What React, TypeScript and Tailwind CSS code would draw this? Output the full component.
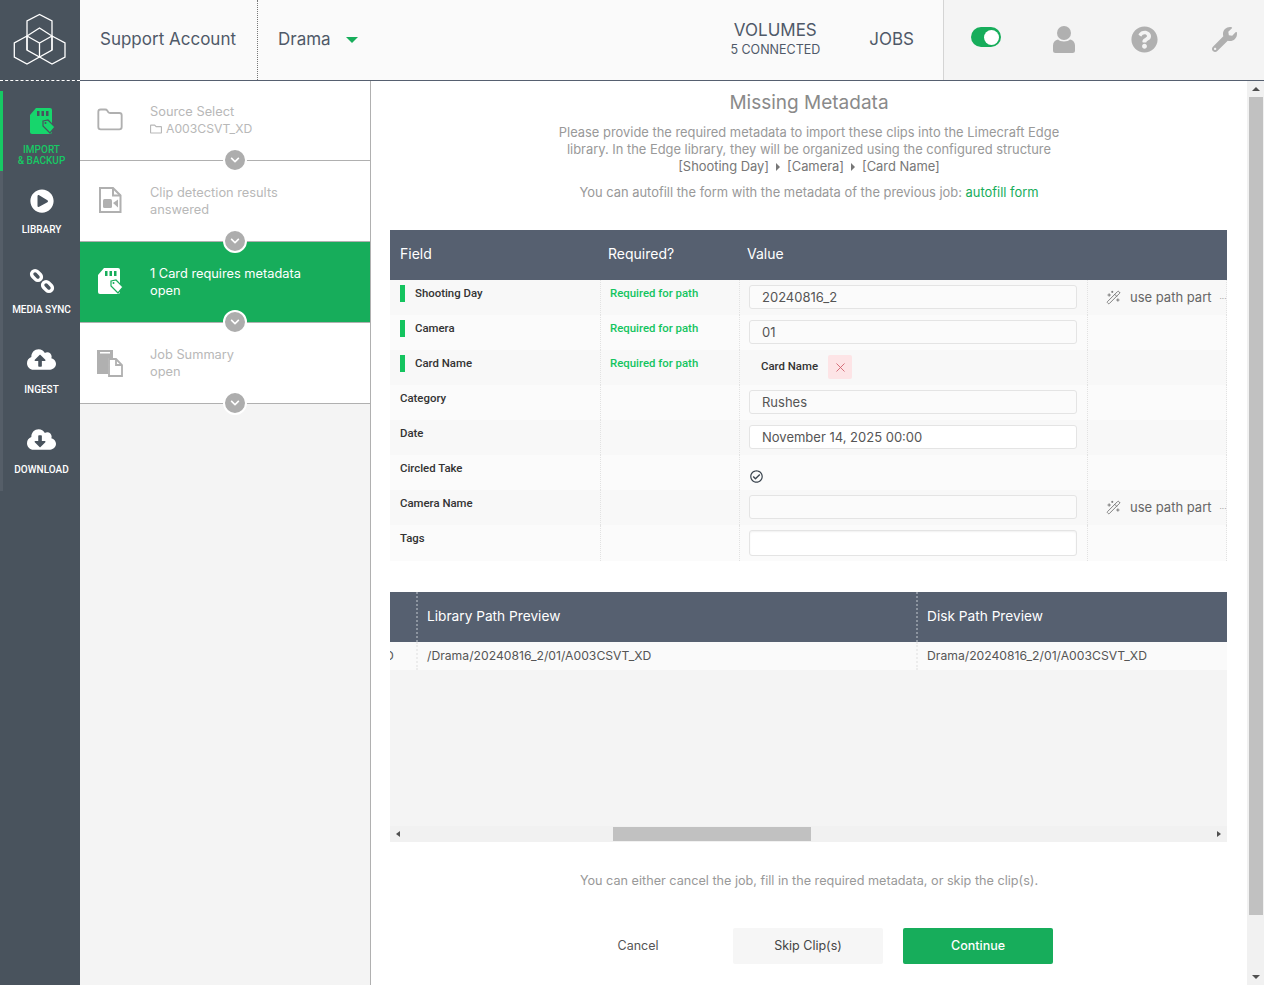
import React from "react";
import {
  FaChevronDown,
  FaCloudDownloadAlt,
  FaCloudUploadAlt,
  FaPlayCircle,
  FaQuestionCircle,
  FaRegCheckCircle,
  FaRegFolder,
  FaWrench,
} from "react-icons/fa";
import { Folder, WandSparkles, X } from "lucide-react";

const BODY = "font-['Inter','Liberation_Sans',sans-serif]";
const LABEL = "font-['Roboto','Liberation_Sans',sans-serif]";

const Logo = () => (
  <svg width="80" height="80" viewBox="0 0 80 80" fill="none" stroke="#fff" strokeWidth="1.3">
    <path d="M27 50V21L39.5 14.5L52 21V50" />
    <path d="M27 36L39.5 28L52 36V50L39.5 57L27 50Z" />
    <path d="M27 36L39.5 43L52 36M39.5 43V57" />
    <path d="M27 36L14.3 43V57L27 64L39.5 57L52 64L65 57V43L52 36" />
  </svg>
);

const SdCard = ({ color, tag }: { color: string; tag: string }) => (
  <svg width="26" height="26" viewBox="0 0 26 26">
    <path d="M7 0H21a2 2 0 0 1 2 2V24a2 2 0 0 1-2 2H3a2 2 0 0 1-2-2V7Z" fill={color} />
    <path d="M8 3h2.500v5H8ZM12.500 3H15v5h-2.500ZM17 3h2.500v5H17Z" fill={tag} />
    <path d="M14 13l5-1 7 7-5 6-7-7Z" fill={color} stroke={tag} strokeWidth="1.2" />
    <circle cx="16.500" cy="15" r="1" fill={tag} />
  </svg>
);

const VideoFile = () => (
  <svg width="24" height="26" viewBox="0 0 24 26" fill="none">
    <path d="M2 1H15L22.500 8.500V25H2Z" stroke="#b0b0b0" strokeWidth="2" />
    <path d="M15 1V8.500H22.500" stroke="#b0b0b0" strokeWidth="2" />
    <rect x="5" y="12" width="9" height="9" rx="1.500" fill="#b0b0b0" />
    <path d="M15 16L20 12.500V20.500Z" fill="#b0b0b0" />
  </svg>
);

const Summary = () => (
  <svg width="28" height="28" viewBox="0 0 28 28">
    <path d="M1 1H17V9H12V25H1Z" fill="#b0b0b0" />
    <path d="M13 10H20L26 16V27H13Z" fill="#fff" stroke="#b0b0b0" strokeWidth="1.800" />
    <path d="M20 10V16H26" fill="none" stroke="#b0b0b0" strokeWidth="1.800" />
    <rect x="4" y="3" width="10" height="1.500" fill="#fff" />
  </svg>
);

const ChainLink = () => (
  <svg width="26" height="26" viewBox="0 0 26 26" fill="none" stroke="#fff" strokeWidth="3.4">
    <rect x="2" y="4" width="11" height="7" rx="3.500" transform="rotate(45 7.500 7.500)" />
    <rect x="13" y="15" width="11" height="7" rx="3.500" transform="rotate(45 18.500 18.500)" />
  </svg>
);

const UserIcon = () => (
  <svg width="22" height="27" viewBox="0 0 22 27" fill="#b0b0b0">
    <circle cx="11" cy="7" r="7" />
    <path d="M5 13.500C7 16 15 16 17 13.500C20 14 22 16.500 22 19.500V24.500A2.500 2.500 0 0 1 19.500 27H2.500A2.500 2.500 0 0 1 0 24.500V19.500C0 16.500 2 14 5 13.500Z" />
  </svg>
);

const NavItem = ({
  icon,
  label,
  active,
}: {
  icon: React.ReactNode;
  label: React.ReactNode;
  active?: boolean;
}) => (
  <div
    className={`flex h-[80px] flex-col items-center border-l-[3px] pt-[17px] ${
      active ? "border-[#17c964] text-[#17c964]" : "border-[#555e68] text-white"
    }`}
  >
    <div className="flex h-[26px] items-center justify-center">{icon}</div>
    <div className={`${LABEL} mt-[10px] text-center text-[10px] leading-[11px] font-medium`}>{label}</div>
  </div>
);

const Step = ({
  icon,
  title,
  sub,
  active,
  first,
}: {
  icon: React.ReactNode;
  title: string;
  sub: React.ReactNode;
  active?: boolean;
  first?: boolean;
}) => (
  <div
    className={`relative flex shrink-0 border-b border-[#b0b0b0] ${first ? "h-[80px]" : "h-[81px]"} ${
      active ? "bg-[#17ad5b] text-white" : "bg-white text-[#b8b8b8]"
    }`}
  >
    <div className={`flex w-[70px] items-start justify-center pr-[10px] ${first ? "pt-[25px]" : "pt-[26px]"}`}>{icon}</div>
    <div className={`${BODY} text-[12.8px] leading-[17px] ${first ? "pt-[22px]" : "pt-[23px]"}`}>
      <div>{title}</div>
      <div>{sub}</div>
    </div>
    <div className="absolute bottom-[-12px] left-[143px] z-10 box-content flex h-[20px] w-[20px] items-center justify-center rounded-full border-[2px] border-white bg-[#adadad]">
      <FaChevronDown className="text-white" size={10} />
    </div>
  </div>
);

type Row = {
  name: string;
  required?: boolean;
  value: React.ReactNode;
  path?: boolean;
  height?: string;
};

const Input = ({ value, white, tall }: { value?: string; white?: boolean; tall?: boolean }) => (
  <div
    className={`${BODY} flex w-[328px] items-center rounded-[3px] border border-[#e4e4e4] pt-[1px] pl-[12px] text-[13px] text-[#555] ${
      tall ? "h-[26px] shadow-[inset_0_1px_2px_rgba(0,0,0,0.06)]" : "h-[24px]"
    } ${white ? "bg-white" : "bg-[#fbfbfb]"}`}
  >
    {value}
  </div>
);

const rows: Row[] = [
  { name: "Shooting Day", required: true, value: <Input value="20240816_2" />, path: true },
  { name: "Camera", required: true, value: <Input value="01" /> },
  {
    name: "Card Name",
    required: true,
    value: (
      <div className="flex items-center">
        <span className={`${LABEL} ml-[12px] w-[67px] text-[11.4px] font-medium text-[#333]`}>Card Name</span>
        <span className="flex h-[24px] w-[24px] items-center justify-center rounded-[2px] bg-[#fde4e6]">
          <X size={15} className="text-[#d0606c]" strokeWidth={1.4} />
        </span>
      </div>
    ),
  },
  { name: "Category", value: <Input value="Rushes" /> },
  { name: "Date", value: <Input value="November 14, 2025 00:00" white /> },
  {
    name: "Circled Take",
    value: <FaRegCheckCircle size={13} className="mt-[10px] ml-[1px] text-[#3c4650]" />,
  },
  { name: "Camera Name", value: <Input />, path: true },
  { name: "Tags", value: <Input white tall />, height: "h-[36px]" },
];

const UsePath = () => (
  <div className={`${BODY} flex items-center text-[13px] whitespace-nowrap text-[#666]`}>
    <WandSparkles size={15} strokeWidth={1.3} className="ml-[18px] shrink-0 text-[#666]" />
    <span className="ml-[9px]">use path part</span>
    <span className="ml-[8px] text-[8px] text-[#999]">···</span>
  </div>
);

const SEP = "border-l border-dotted border-[#e2e2e2]";

const MetadataTable = () => (
  <div className="w-[837px]">
    <div className={`${BODY} flex h-[50px] items-center bg-[#566070] pb-[3px] text-[14px] text-white`}>
      <div className="w-[218px] pl-[10px]">Field</div>
      <div className="w-[139px]">Required?</div>
      <div>Value</div>
    </div>
    {rows.map((row, i) => (
      <div
        key={row.name}
        className={`flex ${row.height ?? "h-[35px]"} ${i % 2 === 0 ? "bg-[#f8f8f8]" : "bg-[#fbfbfb]"}`}
      >
        <div className={`${LABEL} flex w-[210px] items-start pl-[10px] text-[11.4px] font-medium text-[#333]`}>
          {row.required && <span className="mt-[5px] mr-[10px] h-[17px] w-[5px] bg-[#14c45f]" />}
          <span className="mt-[5px]">{row.name}</span>
        </div>
        <div className={`${SEP} ${LABEL} w-[139px] pt-[5px] pl-[9px] text-[11.4px] font-medium text-[#14c45f]`}>
          {row.required && "Required for path"}
        </div>
        <div className={`${SEP} flex w-[348px] items-start pt-[5px] pl-[9px]`}>{row.value}</div>
        <div className={`${SEP} flex w-[140px] items-center overflow-hidden border-r`}>{row.path && <UsePath />}</div>
      </div>
    ))}
  </div>
);

const PreviewTable = () => (
  <div className="mt-[31px] w-[837px]">
    <div className={`${BODY} flex h-[50px] bg-[#566070] text-[13.7px] text-white`}>
      <div className="w-[28px] border-r-2 border-dotted border-[#8d95a0]" />
      <div className="flex w-[500px] items-center border-r-2 border-dotted border-[#8d95a0] pb-[2px] pl-[9px]">
        Library Path Preview
      </div>
      <div className="flex items-center pb-[2px] pl-[9px]">Disk Path Preview</div>
    </div>
    <div className={`${BODY} flex h-[28px] items-center bg-[#fafafa] text-[12.2px] text-[#555]`}>
      <div className="h-full w-[28px] overflow-hidden border-r-2 border-dotted border-[#ececec] leading-[28px]">
        <span className="-ml-[5px]">D</span>
      </div>
      <div className="flex h-full w-[500px] items-center border-r-2 border-dotted border-[#ececec] pl-[9px]">
        /Drama/20240816_2/01/A003CSVT_XD
      </div>
      <div className="pl-[9px]">Drama/20240816_2/01/A003CSVT_XD</div>
    </div>
    <div className="h-[156px] bg-[#f4f4f4]" />
    <div className="flex h-[16px] items-center bg-[#f1f1f1] px-[6px]">
      <span className="h-0 w-0 border-y-[3px] border-r-[4px] border-y-transparent border-r-[#505050]" />
      <div className="ml-[213px] h-[14px] w-[198px] bg-[#c1c1c1]" />
      <span className="ml-auto h-0 w-0 border-y-[3px] border-l-[4px] border-y-transparent border-l-[#505050]" />
    </div>
  </div>
);

const App = () => {
  return (
    <div className="flex h-[985px] w-[1264px] overflow-hidden bg-white">
      {/* SIDEBAR */}
      <div className="flex w-[80px] shrink-0 flex-col bg-[#49535d]">
        <div className="h-[81px] border-b border-dashed border-white">
          <Logo />
        </div>
        <div className="mt-[10px]">
          <NavItem
            active
            icon={<SdCard color="#17d66c" tag="#49535d" />}
            label={
              <>
                IMPORT
                <br />& BACKUP
              </>
            }
          />
          <NavItem icon={<FaPlayCircle size={24} />} label="LIBRARY" />
          <NavItem icon={<ChainLink />} label="MEDIA SYNC" />
          <NavItem icon={<FaCloudUploadAlt size={29} className="-mt-[3px]" />} label="INGEST" />
          <NavItem icon={<FaCloudDownloadAlt size={29} className="-mt-[3px]" />} label="DOWNLOAD" />
        </div>
      </div>

      <div className="flex min-w-0 flex-1 flex-col">
        {/* HEADER */}
        <div className="flex h-[81px] shrink-0 border-b border-[#566070] bg-[#fafafa] text-[#4f5968]">
          <div className={`${BODY} flex w-[178px] items-center border-r border-dotted border-[#777] pl-[20px] text-[17px]`}>
            Support Account
          </div>
          <div className={`${BODY} flex items-center pl-[20px] text-[17px]`}>
            Drama
            <span className="ml-[15px] h-0 w-0 border-x-[6px] border-t-[6px] border-x-transparent border-t-[#17ad5b]" />
          </div>
          <div className={`${BODY} ml-auto flex h-full items-center pr-[29px]`}>
            <div className="flex flex-col items-center">
              <span className="text-[17px] leading-[20px]">VOLUMES</span>
              <span className="text-[12.5px] leading-[20px]">5 CONNECTED</span>
            </div>
            <span className="ml-[49px] text-[17px]">JOBS</span>
          </div>
          <div className="flex w-[321px] items-center border-l border-[#d4d4d4] bg-[#f4f4f4] pr-[26px] pb-[2px] pl-[27px] text-[#b0b0b0]">
            <div className="mb-[4px] flex h-[20px] w-[30px] shrink-0 items-center justify-end rounded-full bg-[#17ad5b] pr-[2px]">
              <span className="h-[15px] w-[15px] rounded-full bg-white" />
            </div>
            <div className="ml-[52px]">
              <UserIcon />
            </div>
            <FaQuestionCircle size={27} className="ml-[56px]" />
            <FaWrench size={25} className="ml-[54px]" />
          </div>
        </div>

        <div className="flex min-h-0 flex-1">
          {/* STEPS */}
          <div className="flex w-[291px] shrink-0 flex-col border-r border-[#b0b0b0] bg-[#f4f4f4]">
            <Step
              first
              icon={<Folder size={28} strokeWidth={1.6} className="text-[#b0b0b0]" />}
              title="Source Select"
              sub={
                <span className="flex items-center text-[12.2px]">
                  <FaRegFolder size={12} className="mr-[4px]" />
                  A003CSVT_XD
                </span>
              }
            />
            <Step icon={<VideoFile />} title="Clip detection results" sub="answered" />
            <Step active icon={<SdCard color="#fff" tag="#17ad5b" />} title="1 Card requires metadata" sub="open" />
            <Step icon={<Summary />} title="Job Summary" sub="open" />
          </div>

          {/* MAIN */}
          <div className="flex min-w-0 flex-1">
            <div className="flex w-[876px] flex-col items-center px-[19px]">
              <h1 className={`${BODY} mt-[10px] text-[19px] leading-[24px] text-[#8a8a8a]`}>Missing Metadata</h1>
              <div className={`${BODY} mt-[9px] w-[520px] text-center text-[12.9px] leading-[17px] text-[#999]`}>
                Please provide the required metadata to import these clips into the Limecraft Edge library. In the Edge library, they will be organized using the configured structure
                <div className="flex items-center justify-center text-[#777]">
                  [Shooting Day]
                  <span className="mx-[7px] h-0 w-0 border-y-[4px] border-l-[4px] border-y-transparent border-l-[#777]" />
                  [Camera]
                  <span className="mx-[7px] h-0 w-0 border-y-[4px] border-l-[4px] border-y-transparent border-l-[#777]" />
                  [Card Name]
                </div>
              </div>
              <p className={`${BODY} mt-[9px] text-[12.9px] leading-[17px] text-[#999]`}>
                You can autofill the form with the metadata of the previous job: <span className="text-[#17ad5b]">autofill form</span>
              </p>
              <div className="mt-[29px] self-start">
                <MetadataTable />
                <PreviewTable />
              </div>
              <p className={`${BODY} mt-[30px] text-[12.65px] leading-[17px] text-[#999]`}>
                You can either cancel the job, fill in the required metadata, or skip the clip(s).
              </p>
              <div className={`${BODY} mt-[39px] flex text-[12.5px]`}>
                <button className="h-[36px] w-[146px] text-[#555]">Cancel</button>
                <button className="mr-[20px] ml-[22px] h-[36px] w-[150px] rounded-[2px] bg-[#f6f6f6] text-[#444]">Skip Clip(s)</button>
                <button className="h-[36px] w-[150px] rounded-[2px] bg-[#17ad5b] font-medium text-white">Continue</button>
              </div>
            </div>
            {/* SCROLLBAR */}
            <div className="flex w-[17px] shrink-0 flex-col items-center bg-[#f1f1f1]">
              <span className="mt-[6px] h-0 w-0 border-x-[4px] border-b-[4px] border-x-transparent border-b-[#505050]" />
              <div className="mt-[6px] h-[818px] w-[14px] bg-[#c1c1c1]" />
              <span className="mt-[60px] h-0 w-0 border-x-[4px] border-t-[4px] border-x-transparent border-t-[#505050]" />
            </div>
          </div>
        </div>
      </div>
    </div>
  );
};

export default App;
